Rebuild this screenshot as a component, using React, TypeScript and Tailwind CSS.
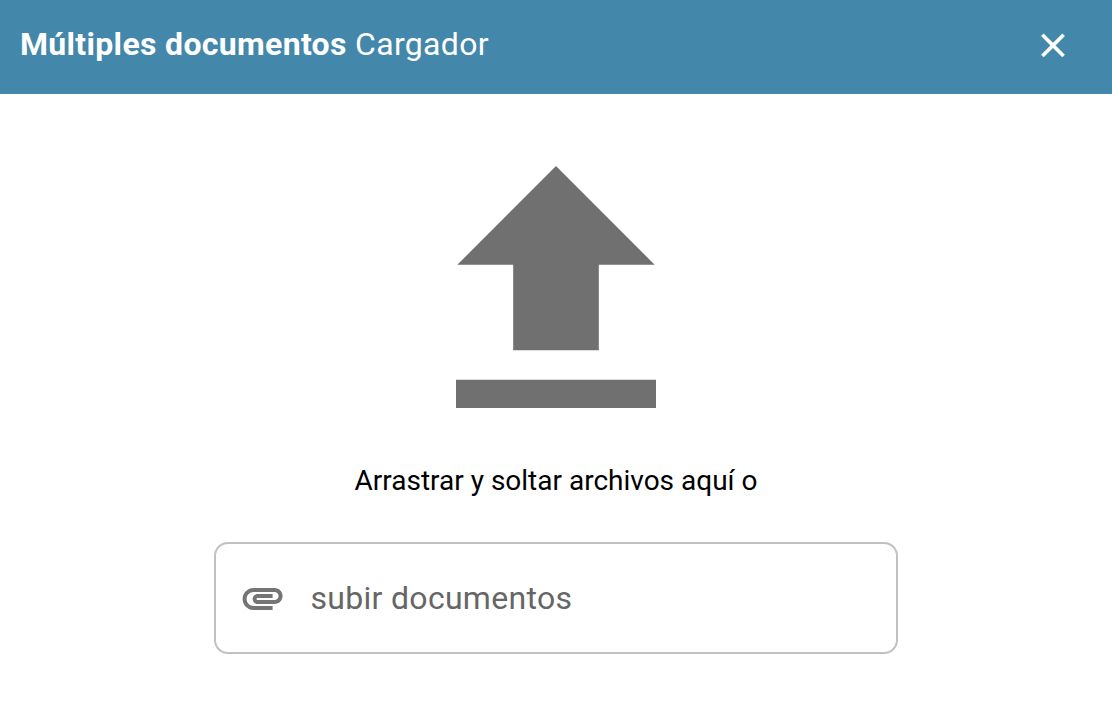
export default function App() {
  return (
    <div className="flex h-[722px] w-full flex-col overflow-hidden bg-white font-['Roboto',sans-serif]">
      <header className="flex h-[94px] shrink-0 items-start justify-between bg-[#4387ab] pr-[39px] pl-5 text-white">
        <h1 className="pt-6 text-[32px] leading-10 tracking-[0.32px] whitespace-nowrap">
          <span className="font-bold">Múltiples documentos</span> <span className="font-normal">Cargador</span>
        </h1>
        <button aria-label="Cerrar" className="mt-[25px]">
          <svg viewBox="0 -0.24 24 24" className="size-10 fill-current stroke-current" strokeWidth="0.25">
            <path d="M19 6.41 17.59 5 12 10.59 6.41 5 5 6.41 10.59 12 5 17.59 6.41 19 12 13.41 17.59 19 19 17.59 13.41 12z" />
          </svg>
        </button>
      </header>
      <main className="flex flex-col items-center pt-[72px]">
        <svg viewBox="0 0 200 242" className="h-[242px] w-[200px] fill-[#707070]">
          <path d="M100 0 198.7 98.8H142.8V184.2H57.2V98.8H1.3zM0 213.8H200V242H0z" />
        </svg>
        <p className="mt-[53px] text-[28px] leading-10 whitespace-nowrap text-black">Arrastrar y soltar archivos aquí o</p>
        <button className="mt-[41px] flex h-[112px] w-[684px] items-center rounded-[14px] border-2 border-[#c1c1c1] pl-[23px] text-left">
          <svg viewBox="0.2 0 24 24" className="size-12 fill-[#757575]">
            <path d="M2 12.5C2 9.46 4.46 7 7.5 7H18c2.21 0 4 1.79 4 4s-1.79 4-4 4H9.5C8.12 15 7 13.88 7 12.5S8.12 10 9.5 10H17v2H9.41c-.55 0-.55 1 0 1H18c1.1 0 2-.9 2-2s-.9-2-2-2H7.5C5.57 9 4 10.57 4 12.5S5.57 16 7.5 16H17v2H7.5C4.46 18 2 15.54 2 12.5z" />
          </svg>
          <span className="ml-[23.5px] text-[32px] leading-10 tracking-[0.3px] whitespace-nowrap text-[#666]">subir documentos</span>
        </button>
      </main>
    </div>
  );
}
